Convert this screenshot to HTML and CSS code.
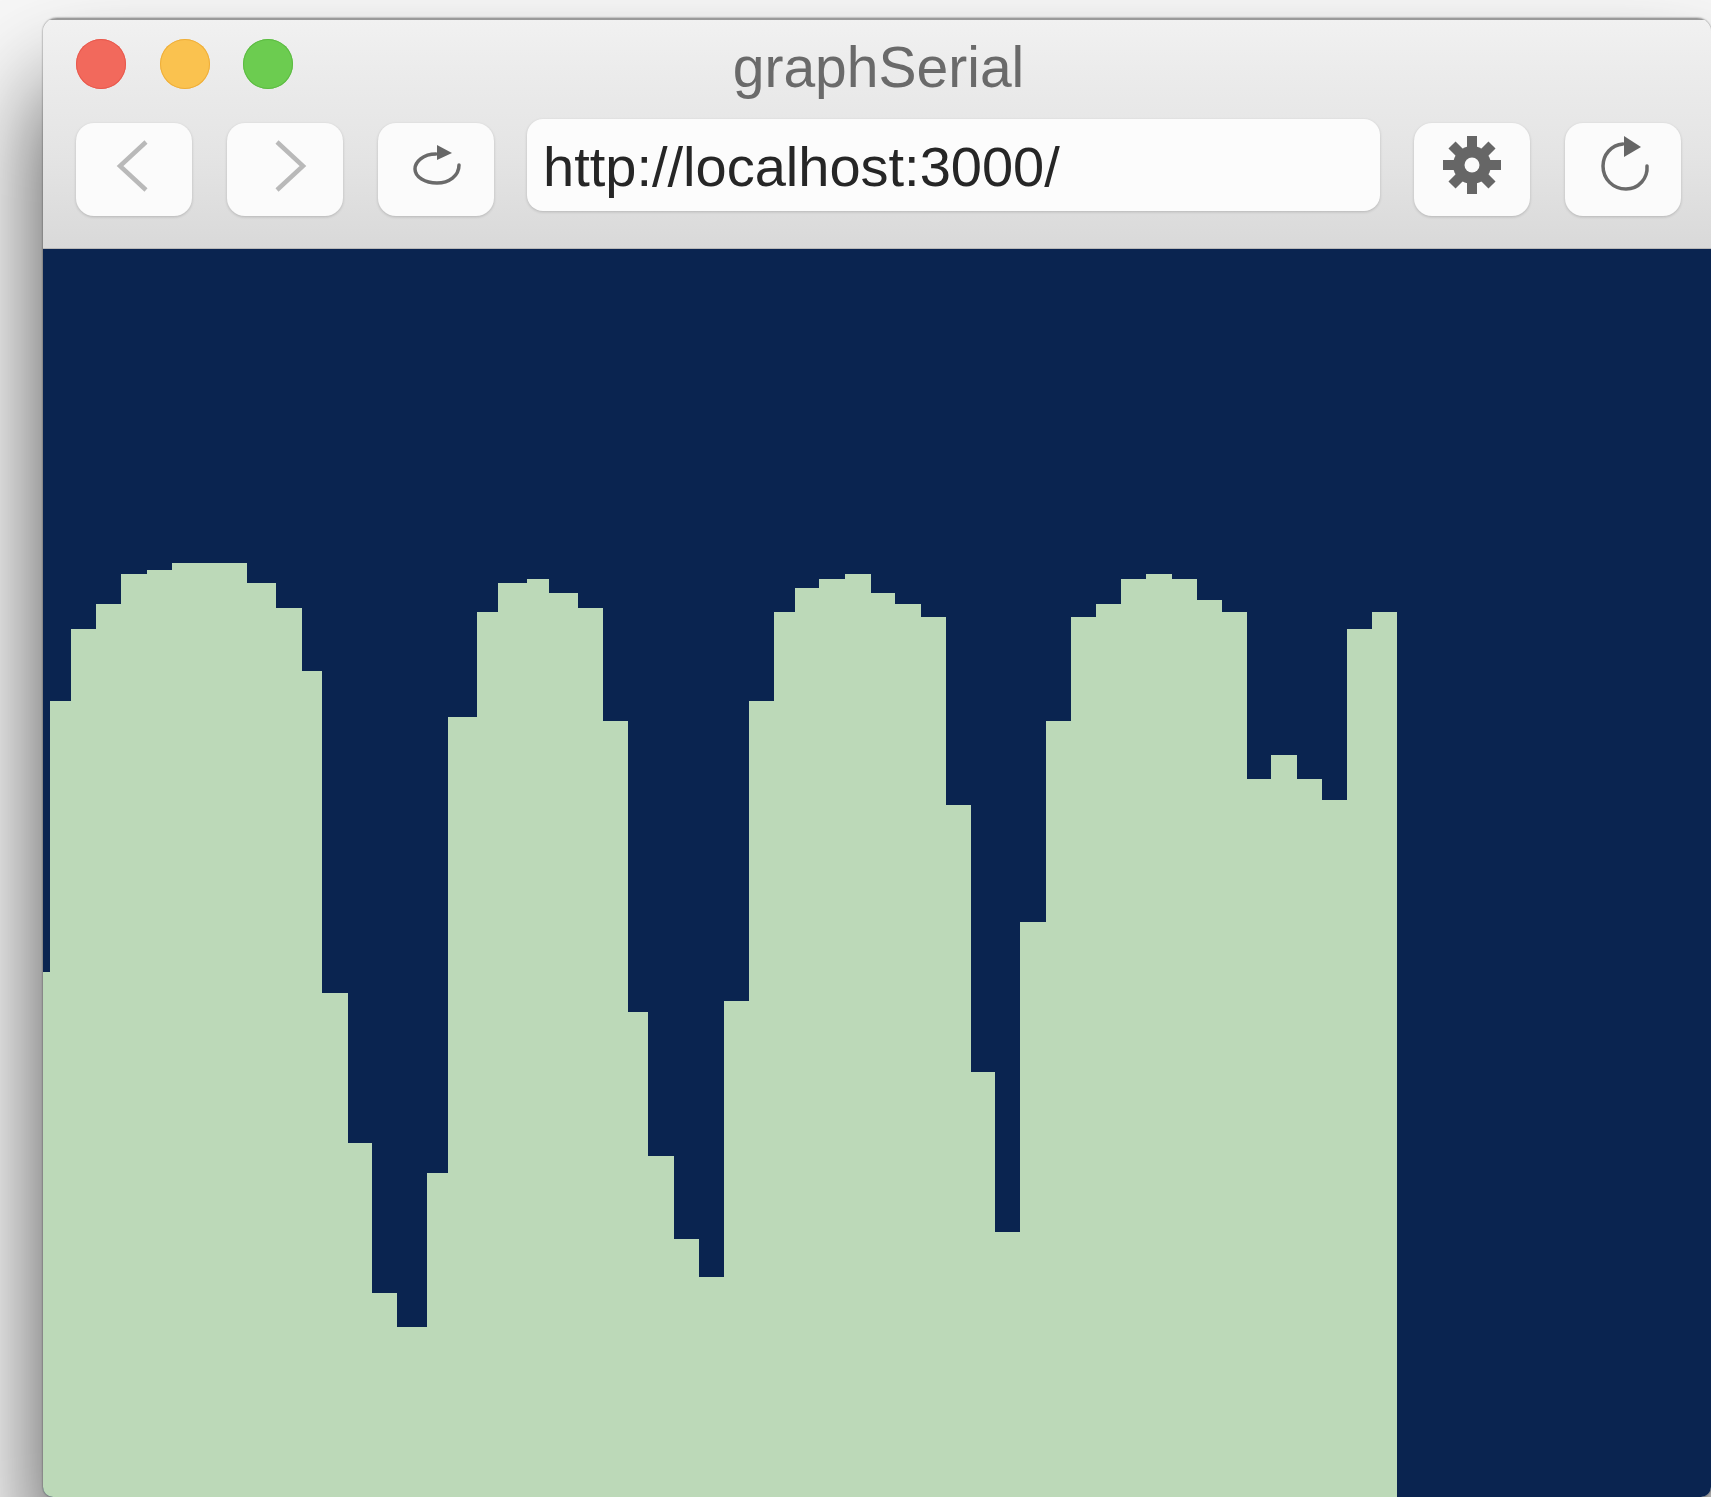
FILE: index.html
```html
<!DOCTYPE html>
<html lang="en">
<head>
<meta charset="utf-8">
<title>graphSerial</title>
<link rel="stylesheet" href="styles.css">
</head>
<body>
<div class="window">
  <header class="chrome">
    <div class="titlebar">
      <div class="lights">
        <span class="light light-close"></span>
        <span class="light light-min"></span>
        <span class="light light-max"></span>
      </div>
      <div class="title">graphSerial</div>
    </div>
    <div class="toolbar">
      <button class="tool" aria-label="Back">
        <svg class="icon" viewBox="0 0 116 93"><path class="line-soft" d="M70 19 L44 43 L70 67"/></svg>
      </button>
      <button class="tool" aria-label="Forward">
        <svg class="icon" viewBox="0 0 116 93"><path class="line-soft" d="M50 19 L76 43 L50 67"/></svg>
      </button>
      <button class="tool" aria-label="Reload">
        <svg class="icon" viewBox="0 0 116 93"><path class="line-thin" d="M58 31 C45 31 37 39 37 46 C37 54 47 60 59 60 C71 60 81 53 81 42"/><path class="fill-dark" d="M59 22 L74 30 L59 37 Z"/></svg>
      </button>
      <div class="address">http://localhost:3000/</div>
      <button class="tool" aria-label="Settings">
        <svg class="icon" viewBox="0 0 116 93">
          <circle class="gear-body" cx="58" cy="42" r="19"/>
          <path class="gear-teeth" d="M58 13 V71 M29 42 H87 M38 22 L78 62 M78 22 L38 62"/>
          <circle class="gear-hole" cx="58" cy="42" r="7.500"/>
        </svg>
      </button>
      <button class="tool" aria-label="Refresh">
        <svg class="icon" viewBox="0 0 116 93"><path class="line-thin" d="M58 21 C46 22 38 32 38 43 C38 56 48 66 61 66 C74 66 83 55 82 43"/><path class="fill-dark" d="M59 13 L76 24 L59 34 Z"/></svg>
      </button>
    </div>
  </header>
  <main class="canvas">
    <!-- stepped serial samples, drawn in window coordinates -->
    <svg class="graph" viewBox="43 249 1668 1248" preserveAspectRatio="none">
      <path class="samples" d="M43 1497 V972 H50 V701 H71 V629 H96 V604 H121 V574 H147 V570 H172 V563 H247 V583 H276 V608 H302 V671 H322 V993 H348 V1143 H372 V1293 H397 V1327 H427 V1173 H448 V717 H477 V612 H498 V583 H527 V579 H549 V593 H578 V608 H603 V721 H628 V1012 H648 V1156 H674 V1239 H699 V1277 H724 V1001 H749 V701 H774 V612 H795 V588 H819 V579 H845 V574 H871 V593 H895 V604 H921 V617 H946 V805 H971 V1072 H995 V1232 H1020 V922 H1046 V721 H1071 V617 H1096 V604 H1121 V579 H1146 V574 H1172 V579 H1197 V600 H1222 V612 H1247 V779 H1271 V755 H1297 V779 H1322 V800 H1347 V629 H1372 V612 H1397 V1497 Z"/>
    </svg>
  </main>
</div>
</body>
</html>
```

FILE: styles.css
```css
* {
  box-sizing: border-box;
}

html,
body {
  height: 100%;
}

body {
  margin: 0;
  padding: 18px 0 0 43px;
  overflow: hidden;
  background: #f7f7f7;
  font-family: "Liberation Sans", Arial, sans-serif;
}

.window {
  height: 100%;
  display: flex;
  flex-direction: column;
  border-radius: 14px 14px 10px 10px;
  overflow: hidden;
  box-shadow: 0 70px 100px rgba(0, 0, 0, 0.7), 0 0 2px rgba(0, 0, 0, 0.6);
}

.chrome {
  height: 231px;
  padding: 0 30px 0 33px;
  border-top: 2px solid #9a9a9a;
  border-bottom: 1px solid #b8b8b8;
  background: linear-gradient(#f1f1f1, #ebebeb 25%, #e4e4e4 60%, #d9d9d9);
}

.titlebar {
  position: relative;
  height: 103px;
  display: flex;
  align-items: center;
  justify-content: center;
}

.lights {
  position: absolute;
  left: 0;
  top: 19px;
  display: flex;
  gap: 33.5px;
}

.light {
  width: 50px;
  height: 50px;
  border-radius: 50%;
}

.light-close {
  background: #f2695c;
  box-shadow: inset 0 0 0 1px #e8594d;
}

.light-min {
  background: #fac24f;
  box-shadow: inset 0 0 0 1px #eeae3a;
}

.light-max {
  background: #6ccc50;
  box-shadow: inset 0 0 0 1px #5cbb42;
}

.title {
  margin-top: -10px;
  font-size: 57px;
  line-height: 66px;
  color: #6a6a6a;
}

.toolbar {
  display: flex;
  align-items: flex-start;
  gap: 35px;
}

.tool {
  flex: none;
  width: 116px;
  height: 93px;
  padding: 0;
  border: 0;
  border-radius: 18px;
  background: #fbfbfb;
  box-shadow: 0 1px 3px rgba(0, 0, 0, 0.18);
}

.icon {
  display: block;
  width: 116px;
  height: 93px;
}

.line-soft {
  fill: none;
  stroke: #b9b9b9;
  stroke-width: 4.500;
  stroke-linecap: butt;
  stroke-linejoin: miter;
}

.line-thin {
  fill: none;
  stroke: #6a6a6a;
  stroke-width: 3.500;
  stroke-linecap: round;
}

.fill-dark {
  fill: #666666;
}

.gear-body {
  fill: #666666;
}

.gear-teeth {
  fill: none;
  stroke: #666666;
  stroke-width: 10;
  stroke-linecap: butt;
}

.gear-hole {
  fill: #fbfbfb;
}

.address {
  flex: 1;
  height: 92px;
  margin: -4px -1px 0 -2px;
  padding-left: 16px;
  border-radius: 16px;
  background: #fcfcfc;
  box-shadow: 0 1px 3px rgba(0, 0, 0, 0.18);
  font-size: 56px;
  line-height: 96px;
  color: #262626;
}

.canvas {
  flex: 1;
  min-height: 0;
  background: #0a2450;
}

.graph {
  display: block;
  width: 100%;
  height: 100%;
}

.samples {
  fill: #bcd9b8;
}
```
